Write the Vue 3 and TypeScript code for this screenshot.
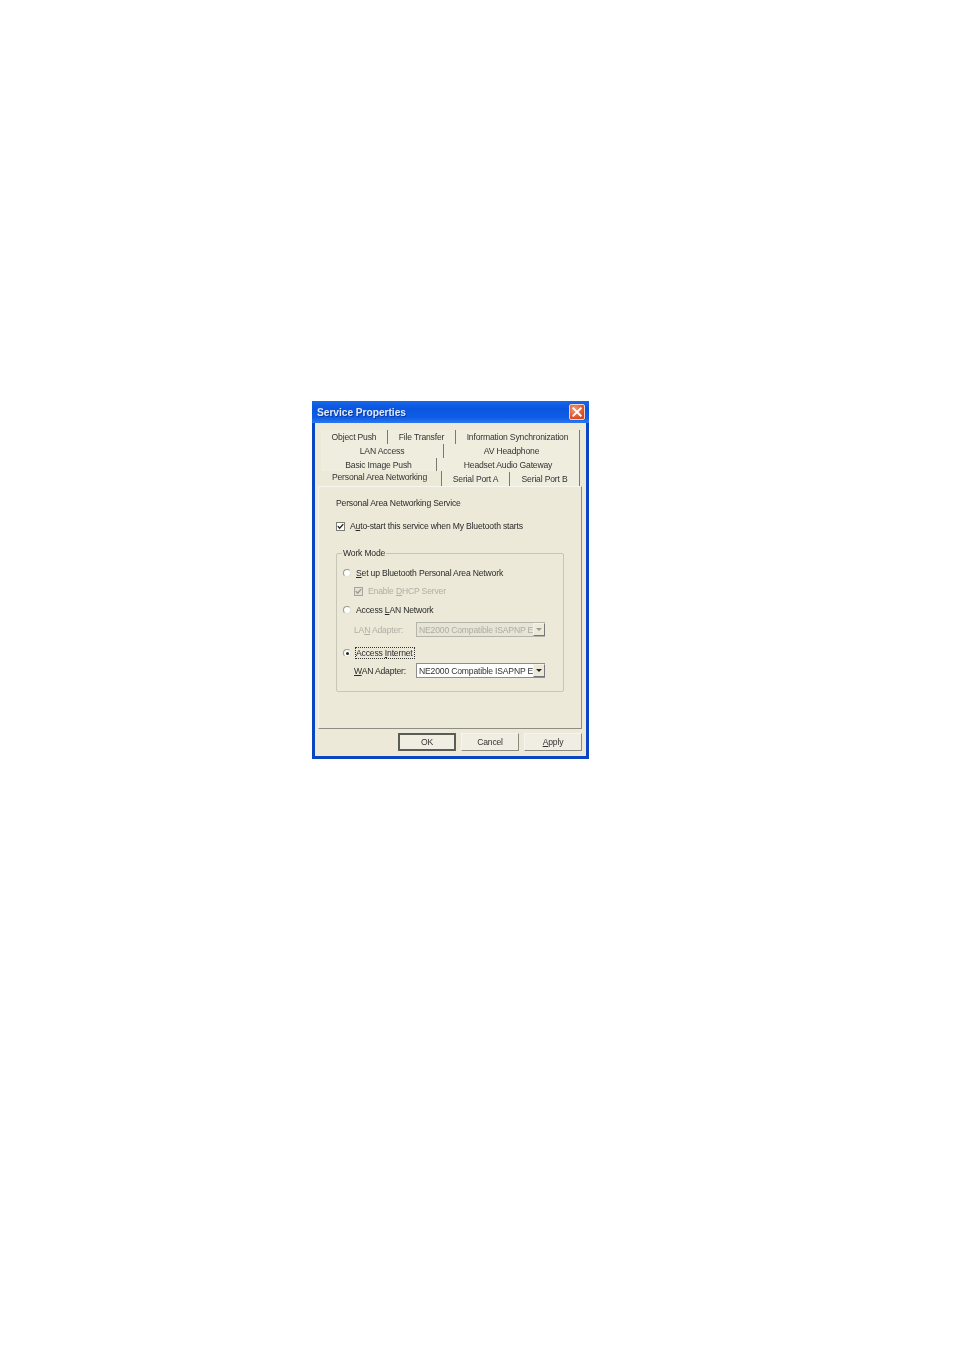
<script setup lang="ts">
interface Tab { label: string; width: number; active?: boolean }
const rows: Tab[][] = [
  [{ label: 'Object Push', width: 67 }, { label: 'File Transfer', width: 68 }, { label: 'Information Synchronization', width: 124 }],
  [{ label: 'LAN Access', width: 123 }, { label: 'AV Headphone', width: 136 }],
  [{ label: 'Basic Image Push', width: 116 }, { label: 'Headset Audio Gateway', width: 143 }],
  [{ label: 'Personal Area Networking', width: 124, active: true }, { label: 'Serial Port A', width: 68 }, { label: 'Serial Port B', width: 70 }],
]
</script>

<template>
  <div class="page">
    <div class="window">
      <div class="titlebar">
        <span class="title">Service Properties</span>
        <span class="close" aria-label="Close">
          <svg viewBox="0 0 16 16" width="12" height="12"><path d="M3 3 L13 13 M13 3 L3 13" stroke="#fff" stroke-width="2.4" stroke-linecap="square" /></svg>
        </span>
      </div>
      <div class="body">
        <div class="tabs">
          <div v-for="(row, i) in rows" :key="i" class="tabrow" :class="{ last: i === 3 }">
            <div v-for="t in row" :key="t.label" class="tab" :class="{ active: t.active }" :style="{ width: t.width + 'px' }">{{ t.label }}</div>
          </div>
        </div>
        <div class="panel">
          <div class="heading">Personal Area Networking Service</div>
          <label class="line auto">
            <span class="check"><svg viewBox="0 0 9 9" width="7" height="7"><path d="M1 4 L3.4 6.6 L8 1.4" fill="none" stroke="#222" stroke-width="1.8" /></svg></span>
            <span>A<u>u</u>to-start this service when My Bluetooth starts</span>
          </label>
          <fieldset class="group">
            <legend>Work Mode</legend>
            <div class="line r1"><span class="radio"></span><span><u>S</u>et up Bluetooth Personal Area Network</span></div>
            <div class="line sub disabled">
              <span class="check dim"><svg viewBox="0 0 9 9" width="7" height="7"><path d="M1 4 L3.4 6.6 L8 1.4" fill="none" stroke="#9a9a90" stroke-width="1.8" /></svg></span>
              <span>Enable <u>D</u>HCP Server</span>
            </div>
            <div class="line r2"><span class="radio"></span><span>Access <u>L</u>AN Network</span></div>
            <div class="adapter disabled a1">
              <span class="alabel">LA<u>N</u> Adapter:</span>
              <div class="select off"><span class="val">NE2000 Compatible ISAPNP E</span><span class="arrow"><i></i></span></div>
            </div>
            <div class="line r3"><span class="radio on"></span><span class="focus">Access <u>I</u>nternet</span></div>
            <div class="adapter a2">
              <span class="alabel"><u>W</u>AN Adapter:</span>
              <div class="select"><span class="val">NE2000 Compatible ISAPNP E</span><span class="arrow"><i></i></span></div>
            </div>
          </fieldset>
        </div>
        <div class="buttons">
          <button class="btn default">OK</button>
          <button class="btn">Cancel</button>
          <button class="btn"><u>A</u>pply</button>
        </div>
      </div>
    </div>
  </div>
</template>

<style>
html, body { margin: 0; background: #fff; }
</style>

<style scoped>
.page {
  width: 954px;
  height: 1350px;
  padding: 401px 0 0 312px;
  box-sizing: border-box;
  background: #fff;
  font-family: "Liberation Sans", Arial, sans-serif;
  font-size: 8.6px;
  letter-spacing: -0.18px;
  color: #2a2a2a;
}
.window {
  width: 277px;
  height: 358px;
  box-sizing: border-box;
  display: flex;
  flex-direction: column;
  background: #0a46c4;
  border-radius: 2px 2px 0 0;
  filter: blur(0.45px);
}
.titlebar {
  height: 22px;
  flex: none;
  display: flex;
  align-items: center;
  justify-content: space-between;
  padding: 0 4px 0 5px;
  background: linear-gradient(180deg, #1668e8 0%, #0a55e0 35%, #0f5de6 75%, #2a78ee 100%);
}
.title {
  color: #dfe9fb;
  font-weight: 700;
  font-size: 10.2px;
  letter-spacing: -0.03px;
  text-shadow: 1px 1px 0 #0b3a9c;
}
.close {
  width: 16px;
  height: 16px;
  display: flex;
  align-items: center;
  justify-content: center;
  border-radius: 2px;
  border: 1px solid #f2d2c4;
  box-sizing: border-box;
  background: radial-gradient(circle at 35% 30%, #ef9a7c, #d8481f 75%);
}
.body {
  flex: 1;
  margin: 0 3px 3px;
  background: #ece9d8;
  display: flex;
  flex-direction: column;
  padding: 7px 4px 0 3px;
}
.tabs { display: flex; flex-direction: column; }
.tabrow {
  display: flex;
  height: 14px;
  align-items: stretch;
  justify-content: flex-end;
  margin-right: 2px;
}
.tab {
  box-sizing: border-box;
  display: flex;
  align-items: center;
  justify-content: center;
  border-right: 1px solid #7a7a70;
  background: #efedde;
  white-space: nowrap;
  color: #333;
}
.tab.active { background: #ece9d8; margin-top: -1px; height: 15px; padding-bottom: 3px; }
.panel {
  height: 243px;
  box-sizing: border-box;
  border: 1px solid #8d8d84;
  border-left-color: #f8f7ef;
  border-top-color: #f8f7ef;
  padding: 10px 17px 0 17px;
}
.heading { height: 12px; line-height: 12px; }
.line {
  display: flex;
  align-items: center;
  gap: 5px;
  height: 12px;
}
.auto { margin-top: 11px; margin-bottom: 16px; }
.check {
  width: 9px;
  height: 9px;
  flex: none;
  box-sizing: border-box;
  border: 1px solid #7d7d76;
  background: #fff;
  display: flex;
  align-items: center;
  justify-content: center;
}
.check.dim { background: #e4e2d4; border-color: #a5a59b; }
.group {
  margin: 0;
  height: 144px;
  width: 228px;
  min-width: 0;
  box-sizing: border-box;
  border: 1px solid #c8c6b6;
  border-radius: 2px;
  padding: 9px 6px 0 6px;
}
.group legend {
  padding: 0 1px;
  margin-left: -1px;
  line-height: 10px;
}
.radio {
  width: 8px;
  height: 8px;
  flex: none;
  box-sizing: border-box;
  border-radius: 50%;
  border: 1px solid #9a9a92;
  border-right-color: #e4e3d8;
  border-bottom-color: #e4e3d8;
  background: #fff;
  position: relative;
}
.radio.on::after {
  content: "";
  position: absolute;
  left: 1.5px;
  top: 1.5px;
  width: 3px;
  height: 3px;
  border-radius: 50%;
  background: #222;
}
.sub { margin: 6px 0 0 11px; gap: 5px; }
.disabled { color: #b0afa4; }
.r2 { margin-top: 7px; }
.adapter {
  display: flex;
  align-items: center;
  height: 15px;
  padding-left: 11px;
}
.a1 { margin-top: 6px; }
.a2 { margin-top: 4px; }
.alabel { width: 62px; flex: none; }
.select {
  width: 129px;
  height: 15px;
  box-sizing: border-box;
  border: 1px solid #8f8f88;
  background: #fff;
  display: flex;
  align-items: center;
  justify-content: space-between;
  padding-left: 2px;
  color: #333;
}
.select.off { background: #e6e4d6; color: #aeada2; border-color: #b5b4a8; }
.val { white-space: nowrap; }
.arrow {
  width: 12px;
  height: 13px;
  flex: none;
  box-sizing: border-box;
  background: #ece9d8;
  border: 1px solid #f4f3ea;
  border-right-color: #777;
  border-bottom-color: #777;
  display: flex;
  align-items: center;
  justify-content: center;
}
.arrow i {
  width: 0;
  height: 0;
  border-left: 3px solid transparent;
  border-right: 3px solid transparent;
  border-top: 3px solid #222;
}
.select.off .arrow i { border-top-color: #999; }
.r3 { margin-top: 10px; gap: 4px; }
.focus { border: 1px dotted #333; line-height: 10px; padding-right: 1px; }
.buttons {
  display: flex;
  justify-content: flex-end;
  gap: 5px;
  margin-top: 4px;
}
.btn {
  width: 58px;
  height: 18px;
  padding: 0;
  box-sizing: border-box;
  font: 8.6px "Liberation Sans", Arial, sans-serif;
  letter-spacing: -0.18px;
  color: #333;
  background: #f0eee2;
  border: 1px solid #f6f5ec;
  border-right-color: #8a8a80;
  border-bottom-color: #8a8a80;
}
.btn.default { border: 2px solid #5c5c56; }
</style>
